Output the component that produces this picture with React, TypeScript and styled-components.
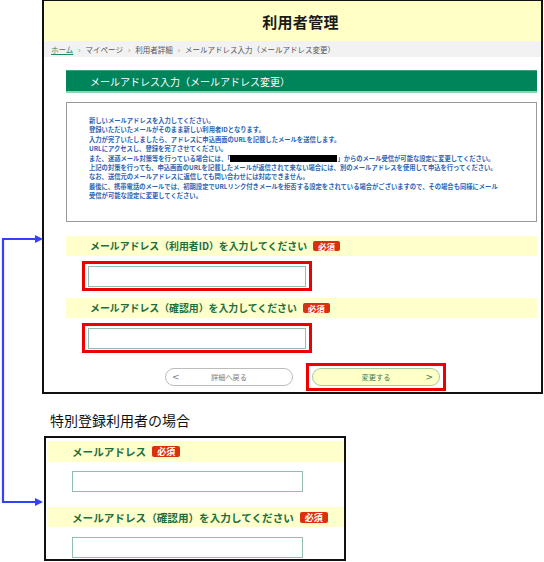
import styled, { createGlobalStyle } from "styled-components";

const GlobalStyle = createGlobalStyle`
  body {
    margin: 0;
    background: #fff;
    font-family: "Noto Sans CJK JP", "Noto Sans", sans-serif;
  }
`;

const Page = styled.div`
  position: relative;
  width: 544px;
  height: 562px;
  overflow: hidden;
  padding-left: 42px;
  box-sizing: border-box;
`;

const Frame = styled.div`
  width: 501px;
  border: 2px solid #111;
  border-top-width: 1px;
  box-sizing: border-box;
  background: #fff;
`;

const Header = styled.div`
  height: 40px;
  background: #ffffc6;
  display: flex;
  align-items: center;
  justify-content: center;
  padding-left: 16px;
  font-size: 15px;
  font-weight: 700;
  color: #1a1a1a;
  letter-spacing: 0.3px;
`;

const Breadcrumb = styled.div`
  height: 16px;
  background: #f2f2f2;
  padding-left: 7px;
  display: flex;
  align-items: center;
  font-size: 7.5px;
  color: #555;
`;

const HomeLink = styled.a`
  color: #1f8a63;
  text-decoration: underline;
`;

const Sep = styled.span`
  margin: 0 5px;
  color: #888;
`;

const Content = styled.div`
  padding: 13px 4px 1px 22px;
`;

const TitleBar = styled.div`
  height: 23px;
  box-sizing: border-box;
  background: #00845a;
  border-top: 1px solid #3aa37c;
  border-bottom: 2px solid #8fd3b2;
  padding-left: 24px;
  display: flex;
  align-items: center;
  color: #fff;
  font-size: 10px;
`;

const Notice = styled.div`
  margin-top: 9px;
  height: 120px;
  box-sizing: border-box;
  border: 1px solid #9a9a9a;
  padding: 13px 0 0 22px;
  color: #2b63b5;
  font-size: 6.3px;
  font-weight: 700;
  line-height: 9.4px;
`;

const Redacted = styled.span`
  display: inline-block;
  width: 107px;
  height: 7px;
  background: #000;
  vertical-align: -1px;
`;

const Band = styled.div<{ $gap: number; $pad: number; $size: number; $h: number }>`
  margin-top: ${(p) => p.$gap}px;
  height: ${(p) => p.$h}px;
  background: #ffffcc;
  padding-left: ${(p) => p.$pad}px;
  display: flex;
  align-items: center;
  gap: 6px;
  font-size: ${(p) => p.$size}px;
  font-weight: 700;
  color: #1d6e3e;
`;

const Badge = styled.span<{ $big?: boolean }>`
  display: inline-block;
  height: ${(p) => (p.$big ? 11 : 10)}px;
  line-height: ${(p) => (p.$big ? 11 : 10)}px;
  padding: 0 5px;
  border-radius: 2px;
  background: #d9300f;
  color: #fff;
  font-size: ${(p) => (p.$big ? 9 : 8.5)}px;
  font-weight: 700;
`;

const Highlight = styled.div<{ $gap: number; $left: number }>`
  display: inline-block;
  margin-top: ${(p) => p.$gap}px;
  margin-left: ${(p) => p.$left}px;
  border: 3px solid #ee0000;
  padding: 1.5px 3px;
`;

const TextInput = styled.div<{ $w: number }>`
  width: ${(p) => p.$w}px;
  height: 21px;
  box-sizing: border-box;
  border: 1.5px solid #92bdb1;
  background: #fff;
`;

const FieldBlock = styled.div`
  display: flex;
  flex-direction: column;
  align-items: flex-start;
`;

const Buttons = styled.div`
  margin-top: 10px;
  display: flex;
  align-items: center;
  justify-content: center;
  padding-left: 8px;
  gap: 13px;
`;

const PillButton = styled.div<{ $primary?: boolean }>`
  position: relative;
  width: 128px;
  height: 18px;
  box-sizing: border-box;
  border-radius: 9px;
  border: 1.5px solid ${(p) => (p.$primary ? "#a3cba3" : "#bcbcbc")};
  background: ${(p) => (p.$primary ? "#ffffc8" : "#fff")};
  color: ${(p) => (p.$primary ? "#3b7a4e" : "#7a7a7a")};
  display: flex;
  align-items: center;
  justify-content: center;
  font-size: 7.2px;
`;

const Chevron = styled.span<{ $side: "left" | "right" }>`
  position: absolute;
  top: 50%;
  transform: translateY(-52%);
  ${(p) => (p.$side === "left" ? "left: 6px;" : "right: 6px;")}
  font-size: 9px;
  font-family: "DejaVu Sans", sans-serif;
  color: inherit;
`;

const SubmitBox = styled.div`
  border: 3px solid #ee0000;
  padding: 2px 3px;
`;

const Caption = styled.div`
  margin-top: 16px;
  padding-left: 8px;
  height: 20px;
  line-height: 20px;
  font-size: 14px;
  color: #111;
`;

const SubFrame = styled.div`
  margin-top: 6px;
  margin-left: 2px;
  width: 302px;
  height: 125px;
  box-sizing: border-box;
  border: 2px solid #111;
  padding: 3px 0 0 1px;
  overflow: hidden;
`;

const SubInput = styled(TextInput)<{ $gap: number }>`
  margin-top: ${(p) => p.$gap}px;
  margin-left: 25px;
`;

const Connector = styled.svg`
  position: absolute;
  left: 0;
  top: 0;
  pointer-events: none;
`;

export default function App() {
  return (
    <>
      <GlobalStyle />
      <Page>
        <Frame>
          <Header>利用者管理</Header>
          <Breadcrumb>
            <HomeLink>ホーム</HomeLink>
            <Sep>›</Sep>マイページ<Sep>›</Sep>利用者詳細<Sep>›</Sep>
            メールアドレス入力（メールアドレス変更）
          </Breadcrumb>
          <Content>
            <TitleBar>メールアドレス入力（メールアドレス変更）</TitleBar>
            <Notice>
              新しいメールアドレスを入力してください。
              <br />
              登録いただいたメールがそのまま新しい利用者IDとなります。
              <br />
              入力が完了いたしましたら、アドレスに申込画面のURLを記載したメールを送信します。
              <br />
              URLにアクセスし、登録を完了させてください。
              <br />
              また、迷惑メール対策等を行っている場合には、「<Redacted />」からのメール受信が可能な設定に変更してください。
              <br />
              上記の対策を行っても、申込画面のURLを記載したメールが返信されて来ない場合には、別のメールアドレスを使用して申込を行ってください。
              <br />
              なお、送信元のメールアドレスに返信しても問い合わせには対応できません。
              <br />
              最後に、携帯電話のメールでは、初期設定でURLリンク付きメールを拒否する設定をされている場合がございますので、その場合も同様にメール
              <br />
              受信が可能な設定に変更してください。
            </Notice>
            <FieldBlock>
              <Band $gap={14} $pad={24} $size={9.9} $h={20} style={{ alignSelf: "stretch" }}>
                メールアドレス（利用者ID）を入力してください<Badge>必須</Badge>
              </Band>
              <Highlight $gap={5} $left={16}>
                <TextInput $w={218} />
              </Highlight>
              <Band $gap={7} $pad={24} $size={9.9} $h={20} style={{ alignSelf: "stretch" }}>
                メールアドレス（確認用）を入力してください<Badge>必須</Badge>
              </Band>
              <Highlight $gap={5} $left={16}>
                <TextInput $w={218} />
              </Highlight>
            </FieldBlock>
            <Buttons>
              <PillButton>
                <Chevron $side="left">&lt;</Chevron>
                詳細へ戻る
              </PillButton>
              <SubmitBox>
                <PillButton $primary>
                  変更する
                  <Chevron $side="right">&gt;</Chevron>
                </PillButton>
              </SubmitBox>
            </Buttons>
          </Content>
        </Frame>

        <Caption>特別登録利用者の場合</Caption>

        <SubFrame>
          <Band $gap={0} $pad={25} $size={10.6} $h={21}>
            メールアドレス<Badge $big>必須</Badge>
          </Band>
          <SubInput $w={231} $gap={9} />
          <Band $gap={15} $pad={25} $size={10.6} $h={20}>
            メールアドレス（確認用）を入力してください<Badge $big>必須</Badge>
          </Band>
          <SubInput $w={231} $gap={10} />
        </SubFrame>

        <Connector width="46" height="562" viewBox="0 0 46 562">
          <path d="M36 239 H3 V502 H36" fill="none" stroke="#3340ff" strokeWidth="2.2" />
          <polygon points="35,235 43,239 35,243" fill="#3340ff" />
          <polygon points="35,498 43,502 35,506" fill="#3340ff" />
        </Connector>
      </Page>
    </>
  );
}
